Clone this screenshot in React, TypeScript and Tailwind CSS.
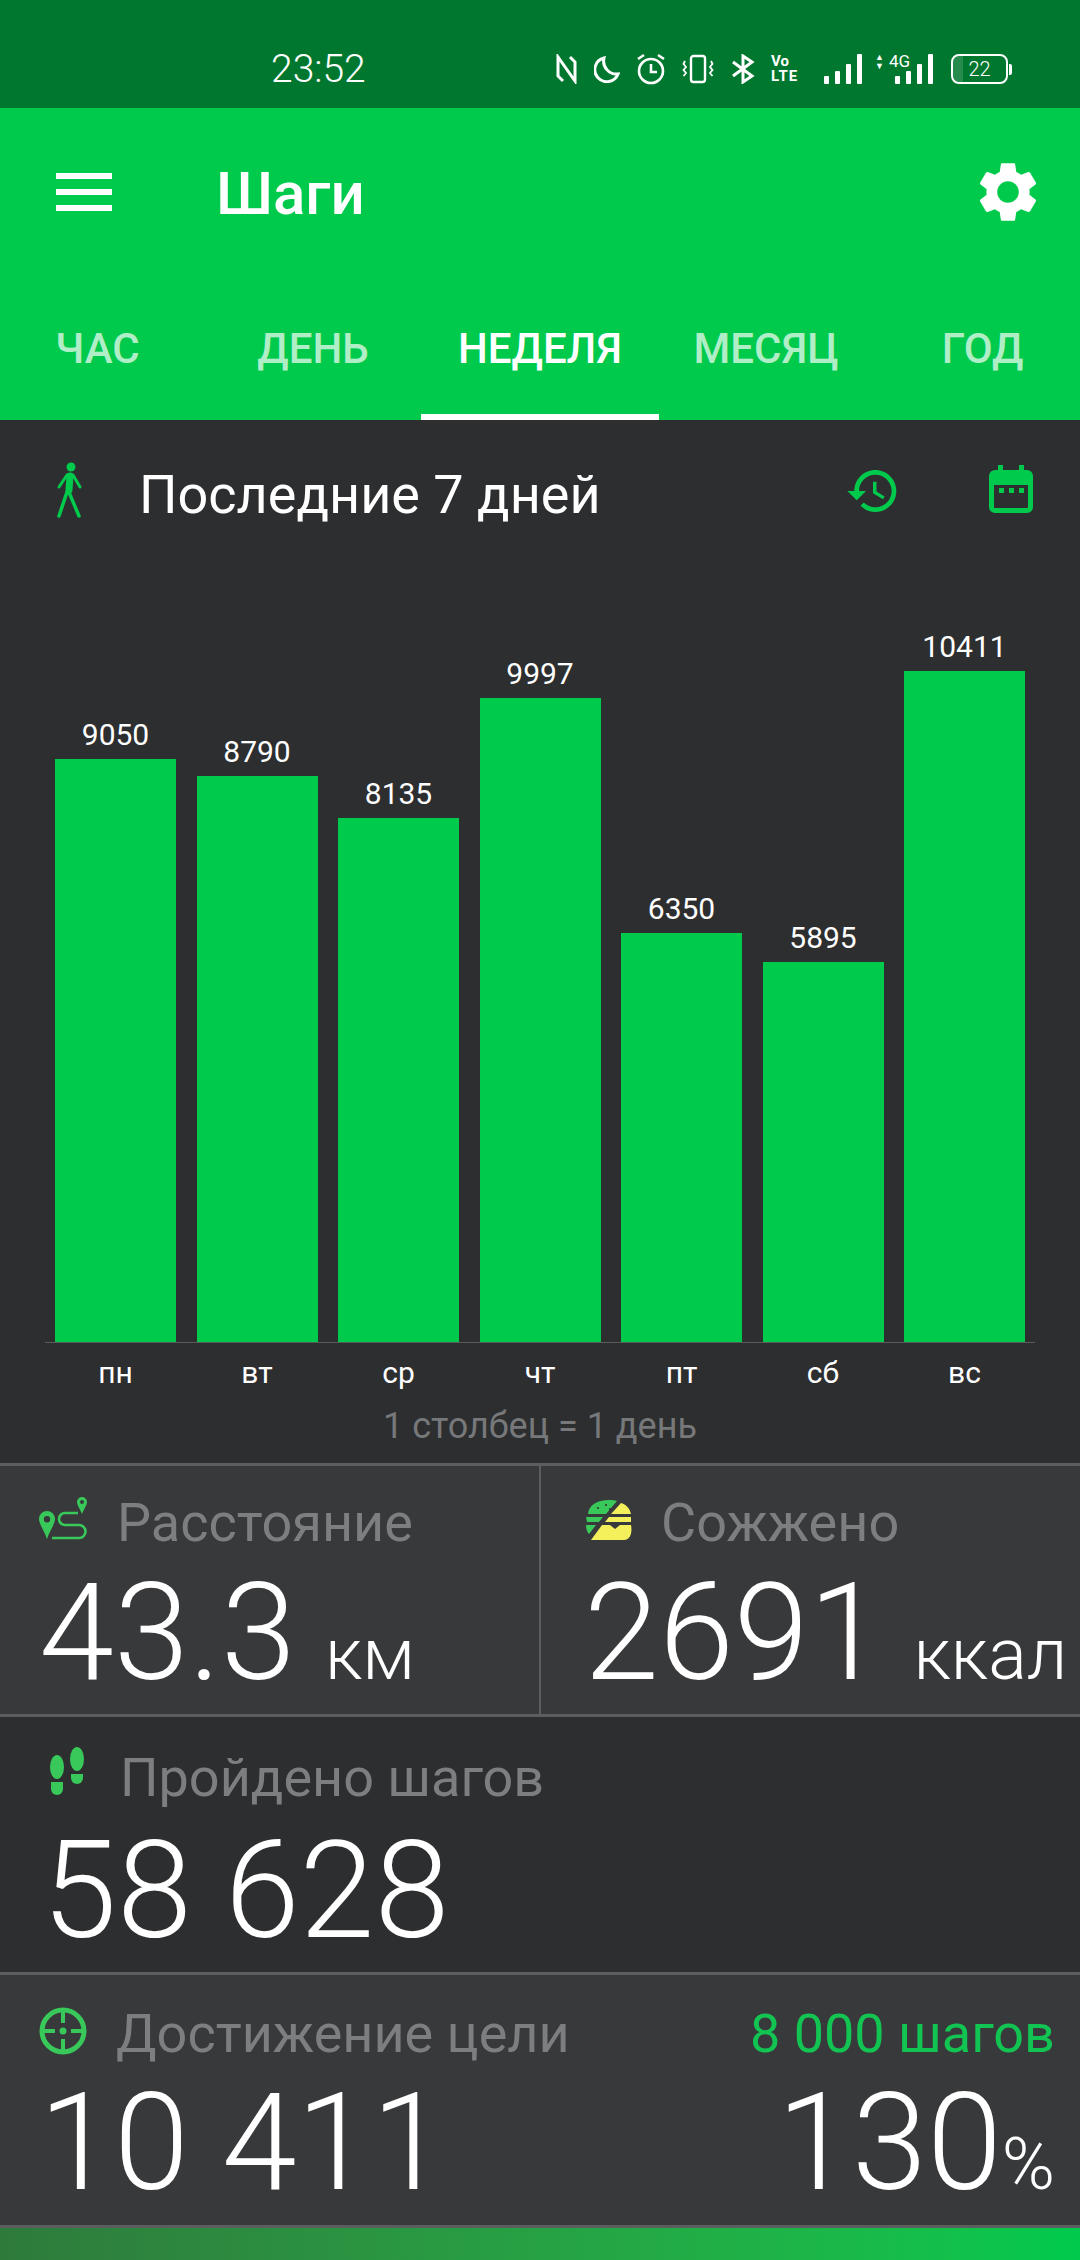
const DAYS = [
  { day: "пн", steps: 9050 },
  { day: "вт", steps: 8790 },
  { day: "ср", steps: 8135 },
  { day: "чт", steps: 9997 },
  { day: "пт", steps: 6350 },
  { day: "сб", steps: 5895 },
  { day: "вс", steps: 10411 },
];

const TABS = [
  { name: "ЧАС", cls: "pr-[6px]" },
  { name: "ДЕНЬ", cls: "pl-[4px]" },
  { name: "НЕДЕЛЯ", cls: "" },
  { name: "МЕСЯЦ", cls: "pr-[6px]" },
  { name: "ГОД", cls: "pl-[6px]" },
];

function SignalBars() {
  return (
    <div className="flex items-end gap-[6px]">
      <div className="h-[8px] w-[5px] rounded-[1px] bg-white" />
      <div className="h-[13px] w-[5px] rounded-[1px] bg-white" />
      <div className="h-[20px] w-[5px] rounded-[1px] bg-white" />
      <div className="h-[30px] w-[5px] rounded-[1px] bg-white" />
    </div>
  );
}

function StatusIcons() {
  return (
    <div className="ml-[285px] flex items-center text-white">
      <svg width="22" height="30" viewBox="0 0 22 30" fill="none" stroke="currentColor" strokeWidth="3">
        <path d="M7 27 2 22V3l17 24V8l-5-5" />
      </svg>
      <svg className="ml-[16px]" width="26" height="28" viewBox="0 0 26 28" fill="none" stroke="currentColor" strokeWidth="3">
        <path d="M10 3a12 12 0 1 0 14 16A13 13 0 0 1 10 3z" />
      </svg>
      <svg className="ml-[16px]" width="30" height="32" viewBox="0 0 30 32" fill="none" stroke="currentColor" strokeWidth="2.6">
        <circle cx="15" cy="18" r="12" />
        <path d="M15 11v8h6M2 6l6-4M28 6l-6-4" />
      </svg>
      <svg className="ml-[16px]" width="32" height="30" viewBox="0 0 32 30" fill="none" stroke="currentColor" strokeWidth="2.4">
        <rect x="9" y="2" width="14" height="26" rx="2.5" />
        <path d="M3 7 1.500 10 4 13l-2.500 3L4 19l-2.500 3M29 7l1.500 3-2.500 3 2.500 3-2.500 3 2.500 3" strokeWidth="1.8" />
      </svg>
      <svg className="ml-[17px]" width="24" height="30" viewBox="0 0 24 30" fill="none" stroke="currentColor" strokeWidth="3">
        <path d="m2 8 19 14-9 6V2l9 6L2 22" />
      </svg>
      <div className="ml-[16px] flex w-[36px] flex-col font-['Roboto',sans-serif] text-[15px] leading-[15px] font-bold">
        <span>Vo</span>
        <span className="tracking-[1px]">LTE</span>
      </div>
      <div className="ml-[17px]">
        <SignalBars />
      </div>
      <div className="relative ml-[13px] h-[30px] w-[58px]">
        <span className="absolute top-[-2px] left-[14px] font-['Roboto',sans-serif] text-[17px] leading-[18px]">4G</span>
        <span className="absolute top-[-1px] left-0 text-[9px] leading-[8px]">▲</span>
        <span className="absolute top-[8px] left-0 text-[9px] leading-[8px]">▼</span>
        <div className="absolute right-0 bottom-0">
          <SignalBars />
        </div>
      </div>
      <div className="ml-[18px] flex items-center">
        <div className="relative h-[30px] w-[57px] overflow-hidden rounded-[8px] border-2 border-white">
          <div className="absolute inset-y-0 left-0 w-[10px] bg-white/15" />
          <div className="relative text-center font-['Roboto',sans-serif] text-[20px] leading-[26px] font-light">22</div>
        </div>
        <div className="ml-[1px] h-[11px] w-[3px] rounded-r-[2px] bg-white" />
      </div>
    </div>
  );
}

function Header() {
  return (
    <div className="h-[312px] bg-[#00ca4c] text-white">
      <div className="flex h-[120px] items-center pt-[47px] pl-[56px]">
        <div className="flex h-[38px] w-[56px] flex-col justify-between">
          <div className="h-[6px] bg-white" />
          <div className="h-[6px] bg-white" />
          <div className="h-[6px] bg-white" />
        </div>
        <div className="mt-[4px] ml-[104px] text-[60px] leading-none font-medium">Шаги</div>
        <svg className="ml-auto mr-[36px]" width="72" height="72" viewBox="0 0 24 24" fill="currentColor">
          <path d="M19.14 12.94c.04-.3.06-.61.06-.94 0-.32-.02-.64-.07-.94l2.03-1.58c.18-.14.23-.41.12-.61l-1.92-3.32c-.12-.22-.37-.29-.59-.22l-2.39.96c-.5-.38-1.03-.7-1.62-.94l-.36-2.54c-.04-.24-.24-.41-.48-.41h-3.84c-.24 0-.43.17-.47.41l-.36 2.54c-.59.24-1.13.57-1.62.94l-2.39-.96c-.22-.08-.47 0-.59.22L2.74 8.87c-.12.21-.08.47.12.61l2.03 1.58c-.05.3-.09.63-.09.94s.02.64.07.94l-2.03 1.58c-.18.14-.23.41-.12.61l1.92 3.32c.12.22.37.29.59.22l2.39-.96c.5.38 1.03.7 1.62.94l.36 2.54c.05.24.24.41.48.41h3.84c.24 0 .44-.17.47-.41l.36-2.54c.59-.24 1.13-.56 1.62-.94l2.39.96c.22.08.47 0 .59-.22l1.92-3.32c.12-.22.07-.47-.12-.61l-2.01-1.58zM12 15.6c-1.98 0-3.6-1.62-3.6-3.6s1.62-3.6 3.6-3.6 3.6 1.62 3.6 3.6-1.62 3.6-3.6 3.6z" />
        </svg>
      </div>
      <div className="mt-[66px] grid h-[126px] grid-cols-[201px_220px_238px_220px_201px] text-center text-[42px] font-medium">
        {TABS.map((tab, i) => (
          <div key={tab.name} className={i === 2 ? "flex h-[126px] flex-col text-white" : "flex h-[126px] flex-col text-white/70"}>
            <div className={`flex-1 pt-[30px] leading-[50px] ${tab.cls}`}>{tab.name}</div>
            <div className={i === 2 ? "h-[6px] bg-white" : "h-[6px]"} />
          </div>
        ))}
      </div>
    </div>
  );
}

function Chart() {
  return (
    <div className="h-[1043px] bg-[#2d2e30] text-white">
      <div className="flex h-[110px] items-center pt-[40px] pl-[56px]">
        <svg width="28" height="56" viewBox="0 0 28 56" fill="none" stroke="#00ca4c" strokeLinecap="round" className="mt-[-10px]">
          <circle cx="15" cy="5" r="4.500" fill="#00ca4c" stroke="none" />
          <path d="M14 14 13 28" strokeWidth="7" />
          <path d="M11 13 3 25M17 13l7 12" strokeWidth="3" />
          <path d="M11 30 3 54M12 28l11 26" strokeWidth="3.500" />
        </svg>
        <div className="ml-[55px] text-[54px] leading-none">Последние 7 дней</div>
        <svg className="ml-auto mt-[-8px]" width="56" height="56" viewBox="0 0 24 24" fill="#00ca4c">
          <path d="M13 3c-4.97 0-9 4.03-9 9H1l3.890 3.890.07.14L9 12H6c0-3.870 3.130-7 7-7s7 3.130 7 7-3.130 7-7 7c-1.930 0-3.680-.79-4.940-2.060l-1.420 1.420C8.270 19.990 10.510 21 13 21c4.970 0 9-4.030 9-9s-4.030-9-9-9zm-1 5v5l4.280 2.540.72-1.210-3.500-2.080V8H12z" />
        </svg>
        <svg className="mt-[-12px] mr-[47px] ml-[88px]" width="44" height="48" viewBox="0 0 44 48" fill="#00ca4c">
          <path fillRule="evenodd" d="M9 0h5v5h16V0h5v5h3a6 6 0 0 1 6 6v31a6 6 0 0 1-6 6H6a6 6 0 0 1-6-6V11a6 6 0 0 1 6-6h3zM5 20v22a1 1 0 0 0 1 1h32a1 1 0 0 0 1-1V20z" />
          <path d="M10 23h5v5h-5zM20 23h5v5h-5zM30 23h5v5h-5z" />
        </svg>
      </div>
      <div className="mx-[45px] mt-[96px] flex h-[717px] items-end justify-between border-b border-[#5a5b5d] px-[10px]">
        {DAYS.map((d) => (
          <div key={d.day} className="flex w-[121px] flex-col items-center">
            <div className="mb-[6px] text-[30px] leading-[36px]">{d.steps}</div>
            <div className="w-full bg-[#00ca4c]" style={{ height: d.steps * 0.06445 }} />
          </div>
        ))}
      </div>
      <div className="mx-[55px] mt-[12px] flex justify-between">
        {DAYS.map((d) => (
          <div key={d.day} className="w-[121px] text-center text-[30px] leading-[36px]">{d.day}</div>
        ))}
      </div>
      <div className="mt-[15px] text-center text-[36px] leading-[40px] text-[#77787a]">1 столбец = 1 день</div>
    </div>
  );
}

function RouteIcon() {
  return (
    <svg width="48" height="44" viewBox="0 0 48 44" fill="none" className="mt-[-8px]">
      <path fillRule="evenodd" fill="#38c95a" d="M8 14a8 8 0 0 1 8 8c0 5-5 11-8 20-3-9-8-15-8-20a8 8 0 0 1 8-8zm0 5a3.200 3.200 0 1 0 0 6.400 3.200 3.200 0 0 0 0-6.400z" />
      <path fillRule="evenodd" fill="#38c95a" d="M43 0a5 5 0 0 1 5 5c0 3-3 7-5 12-2-5-5-9-5-12a5 5 0 0 1 5-5zm0 3a2 2 0 1 0 0 4 2 2 0 0 0 0-4z" />
      <path stroke="#38c95a" strokeWidth="2.6" d="M39 16H26a6 6 0 0 0 0 12h14a6.500 6.500 0 0 1 0 13H13" />
    </svg>
  );
}

function BurgerIcon() {
  return (
    <svg width="46" height="42" viewBox="0 0 46 42" className="mt-[-6px]">
      <path fill="#38c95a" d="M2 15C3 6 11 1 23 1c3 0 6 .4 8 1L20 15zM0 18h17l-4 5H1zM0 26h10l-7 9c-2-2-3-5-3-9z" />
      <circle cx="12" cy="9" r="1" fill="#2d2e30" />
      <circle cx="20" cy="6" r="1" fill="#2d2e30" />
      <circle cx="24" cy="10" r="1" fill="#2d2e30" />
      <path fill="#f3f05c" d="M35 4c6 2 9 6 10 11H25zM23 18h22v5H19zM16 26h8l5 4 5-4h11c1 4 1 15-7 15H5z" />
    </svg>
  );
}

function StepsIcon() {
  return (
    <svg width="36" height="48" viewBox="0 0 36 48" fill="#38c95a" className="mt-[-14px]">
      <ellipse cx="7" cy="20" rx="7" ry="12" />
      <path d="M1 35h12v7a6 6 0 0 1-12 0z" />
      <ellipse cx="27" cy="12" rx="7" ry="12" />
      <path d="M21 27h12v4a6 6 0 0 1-12 0z" />
    </svg>
  );
}

function TargetIcon() {
  return (
    <svg width="48" height="48" viewBox="0 0 48 48" fill="none" stroke="#38c95a" strokeWidth="5" className="mt-[-6px]">
      <circle cx="24" cy="24" r="21" />
      <path d="M24 3v13M24 32v13M3 24h13M32 24h13" strokeWidth="4" />
      <circle cx="24" cy="24" r="3.500" fill="#38c95a" stroke="none" />
    </svg>
  );
}

function Stats() {
  return (
    <div className="font-light text-white">
      <div className="flex h-[254px] border-t-[3px] border-b-[3px] border-[#5c5d5f] bg-[#38393b]">
        <div className="h-full w-[541px] border-r-[2px] border-[#5c5d5f] pt-[32px] pl-[39px]">
          <div className="flex h-[50px] items-center">
            <RouteIcon />
            <div className="ml-[30px] text-[54px] leading-none font-normal text-[#7d7e80]">Расстояние</div>
          </div>
          <div className="mt-[25px] flex items-baseline text-[135px] leading-[120px]">
            <span>43.3</span>
            <span className="ml-[29px] text-[72px]">км</span>
          </div>
        </div>
        <div className="flex-1 pt-[32px] pl-[45px]">
          <div className="flex h-[50px] items-center">
            <BurgerIcon />
            <div className="ml-[29px] text-[54px] leading-none font-normal text-[#7d7e80]">Сожжено</div>
          </div>
          <div className="mt-[25px] ml-[-2px] flex items-baseline whitespace-nowrap text-[135px] leading-[120px]">
            <span>2691</span>
            <span className="ml-[30px] text-[72px]">ккал</span>
          </div>
        </div>
      </div>
      <div className="h-[255px] bg-[#2d2e30] pt-[36px] pl-[50px]">
        <div className="flex h-[50px] items-center">
          <StepsIcon />
          <div className="ml-[34px] text-[54px] leading-none font-normal text-[#7d7e80]">Пройдено шагов</div>
        </div>
        <div className="mt-[28px] ml-[-8px] text-[135px] leading-[120px]">58 628</div>
      </div>
      <div className="h-[256px] border-t-[3px] border-b-[3px] border-[#5c5d5f] bg-[#38393b] px-[39px] pt-[34px]">
        <div className="flex h-[50px] items-center">
          <TargetIcon />
          <div className="ml-[29px] text-[54px] leading-none font-normal text-[#7d7e80]">Достижение цели</div>
          <div className="mr-[-14px] ml-auto text-[54px] leading-none font-normal text-[#12c452]">8 000 шагов</div>
        </div>
        <div className="mt-[24px] flex items-baseline justify-between text-[135px] leading-[120px]">
          <span>10 411</span>
          <span className="mr-[-14px]">130<span className="text-[72px]">%</span></span>
        </div>
      </div>
    </div>
  );
}

export default function App() {
  return (
    <div className="h-[2260px] w-[1080px] overflow-hidden bg-[#2d2e30] font-['Roboto',sans-serif]">
      <div className="flex h-[108px] items-center bg-[#00772e] pt-[30px] text-white">
        <div className="ml-[271px] w-[0px] text-[39px] leading-none font-light whitespace-nowrap">23:52</div>
        <StatusIcons />
      </div>
      <Header />
      <Chart />
      <Stats />
      <div className="h-[32px] bg-gradient-to-r from-[#2e7a3b] to-[#00ca4c]" />
    </div>
  );
}
